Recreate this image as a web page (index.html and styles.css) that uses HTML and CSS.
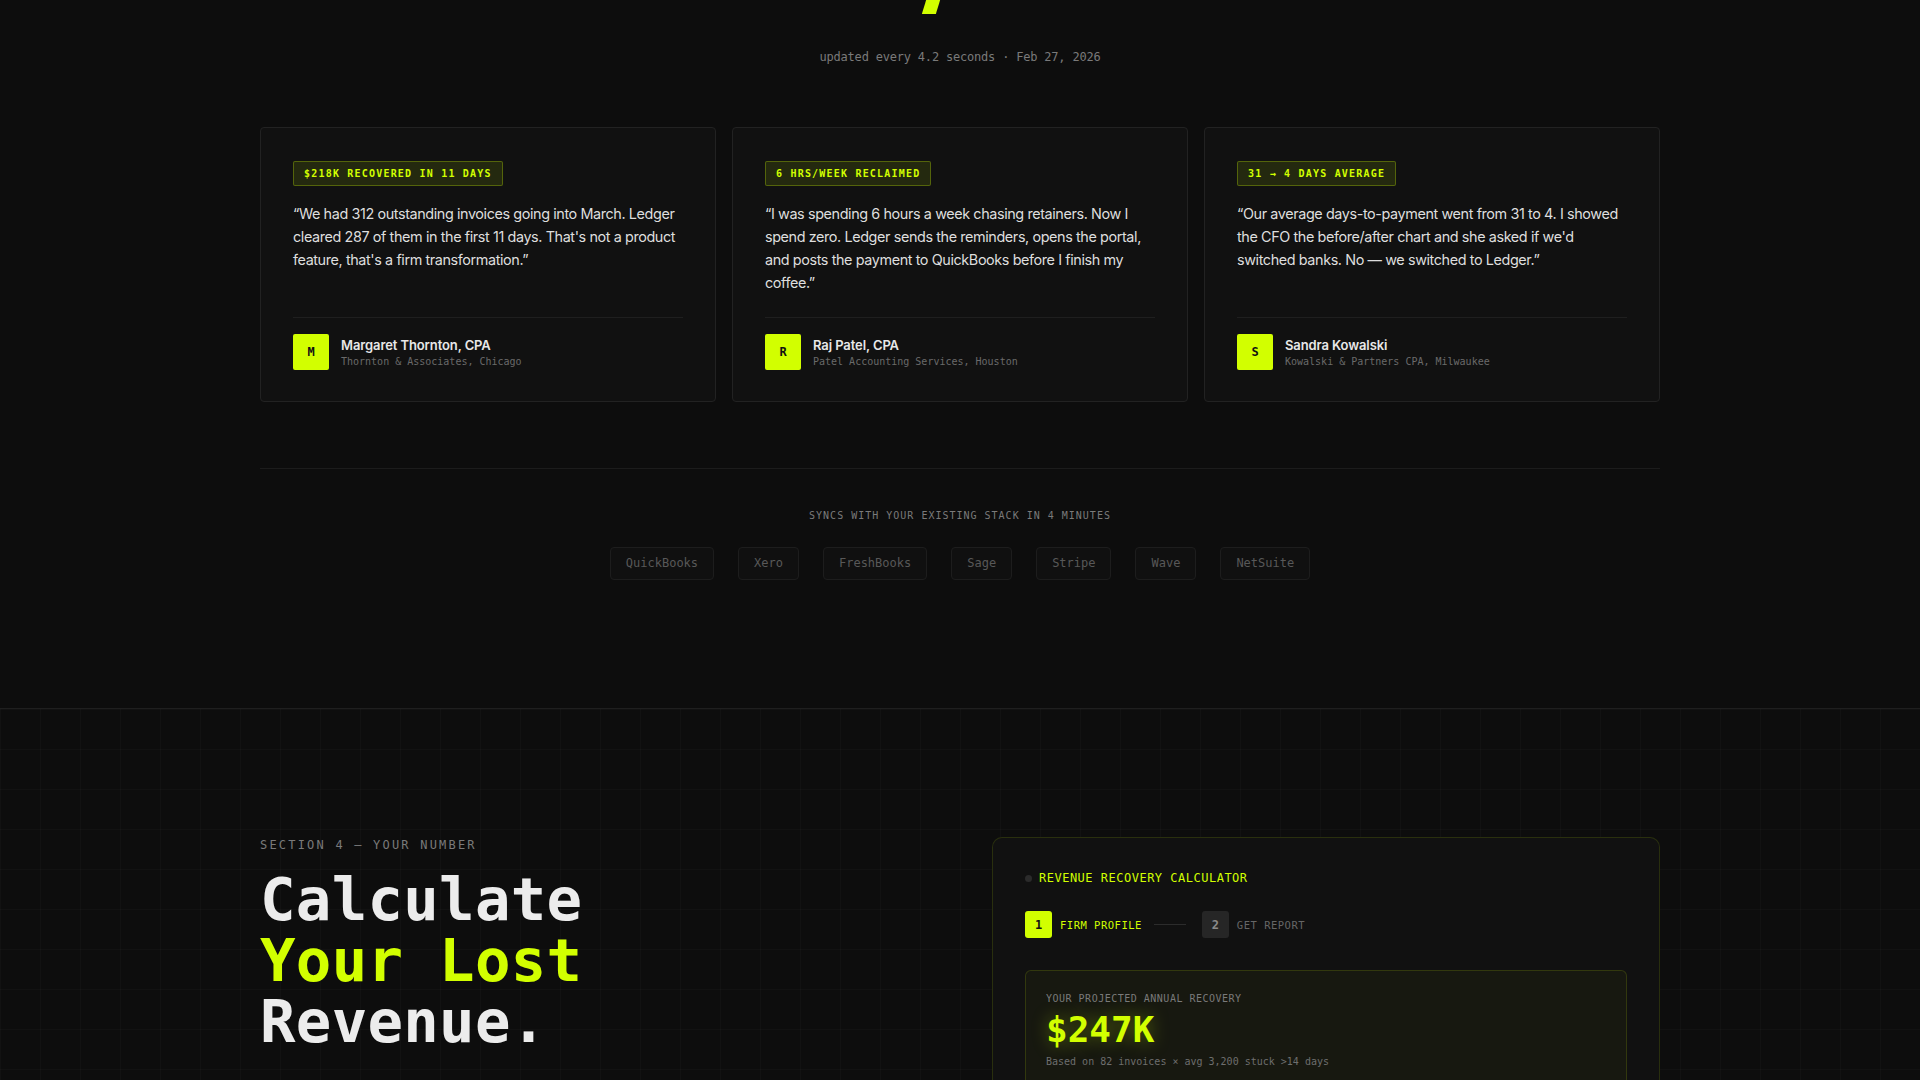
FILE: index.html
```html
<!DOCTYPE html>
<html lang="en">
<head>
    <meta charset="UTF-8">
    <meta name="viewport" content="width=device-width, initial-scale=1.0">
    <title>Ledger — Revenue Recovery</title>
    <link rel="stylesheet" href="styles.css">
</head>
<body>
    <section class="proof">
        <div class="hero-tail"><span class="hero-mark"></span></div>
        <p class="live-note">updated every 4.2 seconds · Feb 27, 2026</p>

        <div class="quotes">
            <article class="quote-card">
                <span class="badge">$218K RECOVERED IN 11 DAYS</span>
                <p class="quote">“We had 312 outstanding invoices going into March. Ledger cleared 287 of them in the first 11 days. That's not a product feature, that's a firm transformation.”</p>
                <div class="author">
                    <div class="avatar">M</div>
                    <div>
                        <div class="author-name">Margaret Thornton, CPA</div>
                        <div class="author-firm">Thornton &amp; Associates, Chicago</div>
                    </div>
                </div>
            </article>
            <article class="quote-card">
                <span class="badge">6 HRS/WEEK RECLAIMED</span>
                <p class="quote">“I was spending 6 hours a week chasing retainers. Now I spend zero. Ledger sends the reminders, opens the portal, and posts the payment to QuickBooks before I finish my coffee.”</p>
                <div class="author">
                    <div class="avatar">R</div>
                    <div>
                        <div class="author-name">Raj Patel, CPA</div>
                        <div class="author-firm">Patel Accounting Services, Houston</div>
                    </div>
                </div>
            </article>
            <article class="quote-card">
                <span class="badge">31 → 4 DAYS AVERAGE</span>
                <p class="quote">“Our average days-to-payment went from 31 to 4. I showed the CFO the before/after chart and she asked if we'd switched banks. No — we switched to Ledger.”</p>
                <div class="author">
                    <div class="avatar">S</div>
                    <div>
                        <div class="author-name">Sandra Kowalski</div>
                        <div class="author-firm">Kowalski &amp; Partners CPA, Milwaukee</div>
                    </div>
                </div>
            </article>
        </div>

        <div class="integrations">
            <p class="integrations-label">SYNCS WITH YOUR EXISTING STACK IN 4 MINUTES</p>
            <div class="pill-row">
                <span class="pill">QuickBooks</span>
                <span class="pill">Xero</span>
                <span class="pill">FreshBooks</span>
                <span class="pill">Sage</span>
                <span class="pill">Stripe</span>
                <span class="pill">Wave</span>
                <span class="pill">NetSuite</span>
            </div>
        </div>
    </section>

    <section class="calc-section">
        <div class="calc-wrap">
            <div class="calc-intro">
                <p class="eyebrow">SECTION 4 — YOUR NUMBER</p>
                <h2 class="calc-title">
                    <span class="title-line">Calculate</span>
                    <span class="title-line lime">Your Lost</span>
                    <span class="title-line">Revenue.</span>
                </h2>
            </div>

            <div class="calc-card">
                <div class="calc-head"><span class="status-dot"></span>REVENUE RECOVERY CALCULATOR</div>
                <div class="steps">
                    <span class="step-num active">1</span>
                    <span class="step-label active">FIRM PROFILE</span>
                    <span class="step-line"></span>
                    <span class="step-num">2</span>
                    <span class="step-label">GET REPORT</span>
                </div>
                <div class="result">
                    <div class="result-label">YOUR PROJECTED ANNUAL RECOVERY</div>
                    <div class="result-value">$247K</div>
                    <div class="result-note">Based on 82 invoices × avg 3,200 stuck &gt;14 days</div>
                </div>
            </div>
        </div>
    </section>
</body>
</html>
```

FILE: styles.css
```css
:root {
    --bg: #0d0d0d;
    --surface: #111111;
    --line: #222222;
    --lime: #d2ff00;
    --text: #e6e6e6;
    --muted: #7a7a7a;
    --dim: #585858;
    --mono: 'DejaVu Sans Mono', 'Liberation Mono', monospace;
    --sans: 'Inter', 'Noto Sans', sans-serif;
}

* {
    margin: 0;
    padding: 0;
    box-sizing: border-box;
}

body {
    background: var(--bg);
    color: var(--text);
    font-family: var(--sans);
    overflow: hidden;
}

/* ---- testimonials ---- */
.proof {
    width: 1400px;
    margin: 0 auto;
}

.hero-tail {
    height: 14px;
    display: flex;
    justify-content: center;
}

.hero-mark {
    width: 14px;
    height: 14px;
    background: var(--lime);
    transform: translateX(-29px) skewX(-17deg);
}

.live-note {
    margin-top: 35px;
    text-align: center;
    font-family: var(--mono);
    font-size: 12px;
    line-height: 16px;
    color: var(--muted);
    letter-spacing: -0.2px;
}

.quotes {
    margin-top: 62px;
    display: grid;
    grid-template-columns: repeat(3, 1fr);
    gap: 16px;
    padding-bottom: 66px;
    border-bottom: 1px solid #1c1c1c;
}

.quote-card {
    background: var(--surface);
    border: 1px solid var(--line);
    border-radius: 4px;
    padding: 33px 32px 31px;
    display: flex;
    flex-direction: column;
    align-items: flex-start;
}

.badge {
    font-family: var(--mono);
    font-size: 10px;
    font-weight: bold;
    letter-spacing: 1.2px;
    color: var(--lime);
    background: rgba(210, 255, 0, 0.1);
    border: 1px solid rgba(210, 255, 0, 0.28);
    border-radius: 2px;
    padding: 0 10px;
    line-height: 23px;
}

.quote {
    margin: 16px 0 23px;
    font-size: 14.4px;
    line-height: 23px;
    letter-spacing: -0.4px;
    color: #dedede;
}

.author {
    margin-top: auto;
    width: 100%;
    border-top: 1px solid #1f1f1f;
    padding-top: 16px;
    display: flex;
    align-items: center;
    gap: 12px;
}

.avatar {
    width: 36px;
    height: 36px;
    border-radius: 2px;
    background: var(--lime);
    color: #111;
    font-family: var(--mono);
    font-size: 12px;
    font-weight: bold;
    display: flex;
    align-items: center;
    justify-content: center;
}

.author-name {
    font-size: 13px;
    line-height: 16px;
    font-weight: 600;
    color: #e8e8e8;
    letter-spacing: -0.1px;
}

.author-firm {
    margin-top: 2px;
    font-family: var(--mono);
    font-size: 10px;
    line-height: 13px;
    color: #6a6a6a;
}

/* ---- integrations strip ---- */
.integrations {
    padding: 40px 0 128px;
    text-align: center;
}

.integrations-label {
    font-family: var(--mono);
    font-size: 10px;
    line-height: 14px;
    letter-spacing: 1px;
    color: var(--muted);
}

.pill-row {
    margin-top: 24px;
    display: flex;
    justify-content: center;
    gap: 24px;
}

.pill {
    font-family: var(--mono);
    font-size: 12px;
    line-height: 31px;
    padding: 0 15px;
    color: var(--dim);
    background: #101010;
    border: 1px solid #1d1d1d;
    border-radius: 4px;
}

/* ---- calculator ---- */
.calc-section {
    border-top: 1px solid #1f1f1f;
    padding-top: 128px;
    min-height: 400px;
    background-color: var(--bg);
    background-image:
        linear-gradient(rgba(255, 255, 255, 0.018) 1px, transparent 1px),
        linear-gradient(90deg, rgba(255, 255, 255, 0.018) 1px, transparent 1px);
    background-size: 40px 40px;
}

.calc-wrap {
    width: 1400px;
    margin: 0 auto;
    display: grid;
    grid-template-columns: 1fr 668px;
    gap: 64px;
    align-items: start;
}

.eyebrow {
    font-family: var(--mono);
    font-size: 12px;
    line-height: 16px;
    letter-spacing: 2.2px;
    color: var(--muted);
}

.calc-title {
    margin-top: 13px;
    font-family: var(--mono);
    font-size: 59px;
    font-weight: bold;
    letter-spacing: 0.3px;
    color: #ececec;
}

.title-line {
    display: block;
    height: 61px;
    line-height: 68px;
    overflow: visible;
}

.lime {
    color: var(--lime);
}

.calc-card {
    background: var(--surface);
    border: 1px solid rgba(210, 255, 0, 0.13);
    border-radius: 10px;
    padding: 32px 32px 40px;
}

.calc-head {
    display: flex;
    align-items: center;
    gap: 7px;
    font-family: var(--mono);
    font-size: 12px;
    line-height: 16px;
    letter-spacing: 0.5px;
    color: var(--lime);
}

.status-dot {
    width: 7px;
    height: 7px;
    border-radius: 50%;
    background: #2b2b2b;
}

.steps {
    margin-top: 25px;
    display: flex;
    align-items: center;
}

.step-num {
    width: 27px;
    height: 27px;
    border-radius: 3px;
    background: #262626;
    color: #8a8a8a;
    font-family: var(--mono);
    font-size: 12px;
    font-weight: bold;
    display: flex;
    align-items: center;
    justify-content: center;
}

.step-num.active {
    background: var(--lime);
    color: #111;
}

.step-label {
    margin-left: 8px;
    font-family: var(--mono);
    font-size: 10.5px;
    letter-spacing: 0.5px;
    color: #666;
}

.step-label.active {
    color: var(--lime);
}

.step-line {
    width: 32px;
    height: 1px;
    background: #2c2c2c;
    margin: 0 16px 0 12px;
}

.result {
    margin-top: 32px;
    padding: 22px 20px 60px;
    background: rgba(210, 255, 0, 0.03);
    border: 1px solid rgba(210, 255, 0, 0.14);
    border-radius: 6px;
}

.result-label {
    font-family: var(--mono);
    font-size: 10px;
    letter-spacing: 0.5px;
    color: var(--muted);
}

.result-value {
    margin-top: 6px;
    font-family: var(--mono);
    font-size: 36px;
    line-height: 40px;
    font-weight: bold;
    color: var(--lime);
    text-shadow: 0 0 18px rgba(210, 255, 0, 0.35);
}

.result-note {
    margin-top: 6px;
    font-family: var(--mono);
    font-size: 10px;
    color: #6e6e6e;
}
```
